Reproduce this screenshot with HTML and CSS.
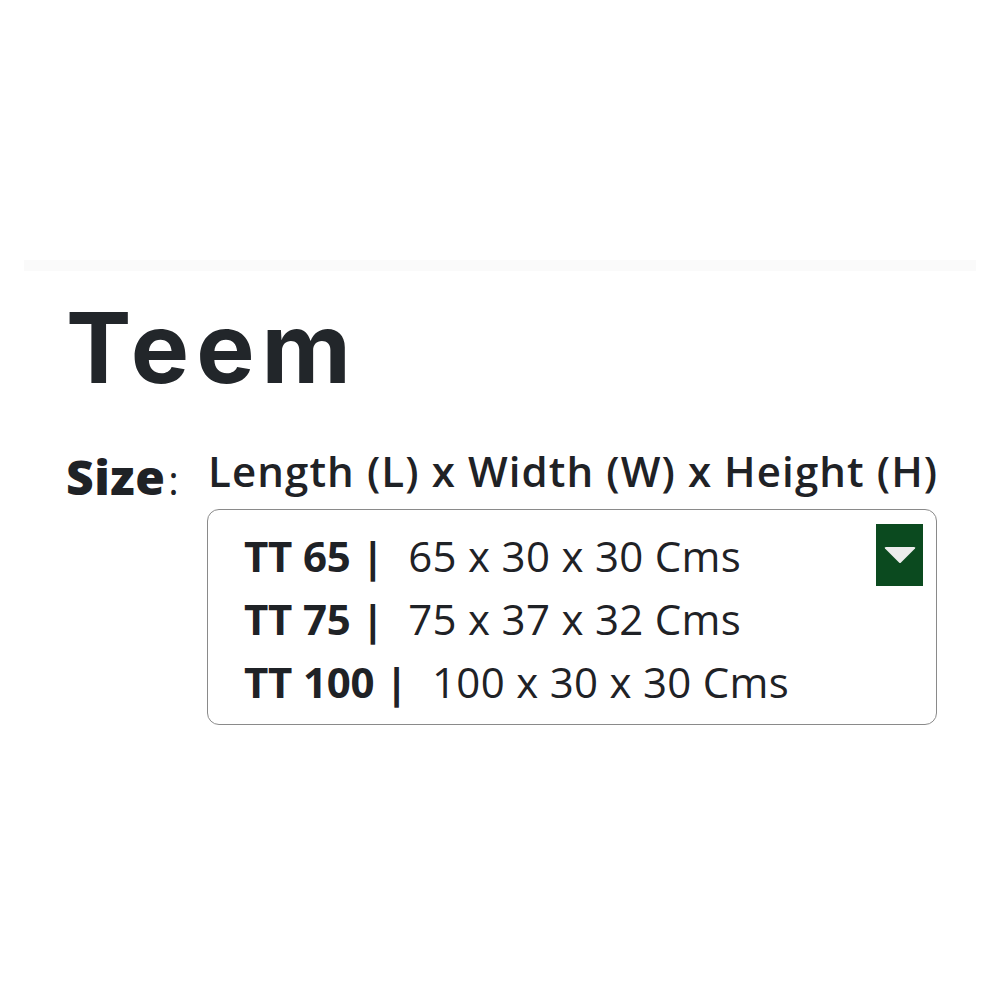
FILE: index.html
```html
<!DOCTYPE html>
<html lang="en">
<head>
    <meta charset="UTF-8">
    <meta name="viewport" content="width=device-width, initial-scale=1.0">
    <title>Teem</title>
    <link rel="stylesheet" href="styles.css">
</head>
<body>
    <!-- faint divider strip -->
    <div class="strip"></div>

    <div class="product">
        <h1 class="title">Teem</h1>

        <div class="size-line">
            <span class="size-label">Size<span class="colon">:</span></span>
            <span class="size-dims">Length (L) x Width (W) x Height (H)</span>
        </div>

        <!-- list of sizes -->
        <div class="size-box">
            <div class="size-list">
                <div class="size-row"><b>TT 65 |</b><span>65 x 30 x 30 Cms</span></div>
                <div class="size-row"><b>TT 75 |</b><span>75 x 37 x 32 Cms</span></div>
                <div class="size-row"><b>TT 100 |</b><span>100 x 30 x 30 Cms</span></div>
            </div>
            <div class="toggle">
                <svg width="32" height="18" viewBox="0 0 32 18"><path d="M2 1 H30 Q32 1 31 2.5 L17 16.5 Q16 17.5 15 16.5 L1 2.5 Q0 1 2 1 Z" fill="#ececec"/></svg>
            </div>
        </div>
    </div>
</body>
</html>
```

FILE: styles.css
```css
body {
    margin: 0;
    background-color: #ffffff;
    color: #1f2226;
    font-family: "Open Sans", Lato, sans-serif;
}

.strip {
    height: 11px;
    margin: 260px 24px 0;
    background-color: #fafafa;
}

.product {
    padding-left: 66px;
}

.title {
    margin: 17px 0 0;
    font-family: Inter, sans-serif;
    font-size: 98px;
    font-weight: 700;
    letter-spacing: 7px;
    line-height: 120px;
    color: #22262a;
}

.size-line {
    display: flex;
    align-items: flex-start;
    margin-top: 38px;
}

.size-label {
    width: 142px;
    font-size: 48px;
    line-height: 61px;
    font-weight: 800;
    letter-spacing: 0.5px;
}

.size-label .colon {
    font-size: 40px;
    font-weight: 400;
    margin-left: 3px;
}

.size-dims {
    font-size: 42px;
    line-height: 50px;
    font-weight: 600;
    letter-spacing: 1.1px;
}

.size-box {
    display: flex;
    justify-content: space-between;
    align-items: flex-start;
    width: 728px;
    height: 214px;
    margin: -1px 0 0 141px;
    border: 1px solid #8a8a8a;
    border-radius: 12px;
}

.size-list {
    padding: 14px 0 0 36px;
}

.size-row {
    font-size: 42px;
    line-height: 63px;
    white-space: pre;
}

.size-row b {
    font-weight: 700;
    letter-spacing: -0.2px;
    margin-right: 24px;
}

.size-row span {
    letter-spacing: 0.3px;
}

.toggle {
    display: flex;
    justify-content: center;
    align-items: center;
    width: 47px;
    height: 62px;
    margin: 14px 13px 0 0;
    background-color: #0b4a1f;
}
```
